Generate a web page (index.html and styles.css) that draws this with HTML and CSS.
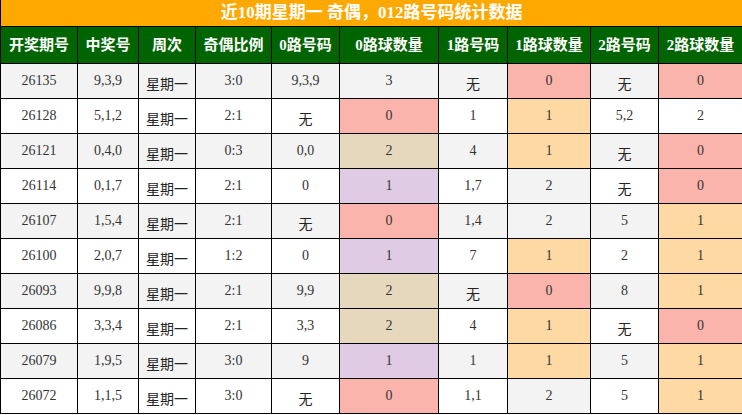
FILE: index.html
```html
<!DOCTYPE html>
<html lang="zh">
<head>
<meta charset="utf-8">
<link rel="stylesheet" href="styles.css">
</head>
<body>
<table class="stats">
  <colgroup>
    <col class="c1"><col class="c2"><col class="c3"><col class="c4"><col class="c5">
    <col class="c6"><col class="c7"><col class="c8"><col class="c9"><col class="c10">
  </colgroup>
  <thead>
    <tr class="title-row"><th colspan="10">近10期星期一 奇偶，012路号码统计数据</th></tr>
    <tr class="head-row">
      <th>开奖期号</th><th>中奖号</th><th>周次</th><th>奇偶比例</th><th>0路号码</th>
      <th>0路球数量</th><th>1路号码</th><th>1路球数量</th><th>2路号码</th><th>2路球数量</th>
    </tr>
  </thead>
  <tbody>
    <tr class="odd">
      <td>26135</td><td>9,3,9</td><td class="cn">星期一</td><td>3:0</td><td>9,3,9</td>
      <td>3</td><td class="cn">无</td><td class="pink">0</td><td class="cn">无</td><td class="pink">0</td>
    </tr>
    <tr>
      <td>26128</td><td>5,1,2</td><td class="cn">星期一</td><td>2:1</td><td class="cn">无</td>
      <td class="pink">0</td><td>1</td><td class="peach">1</td><td>5,2</td><td>2</td>
    </tr>
    <tr class="odd">
      <td>26121</td><td>0,4,0</td><td class="cn">星期一</td><td>0:3</td><td>0,0</td>
      <td class="tan">2</td><td>4</td><td class="peach">1</td><td class="cn">无</td><td class="pink">0</td>
    </tr>
    <tr>
      <td>26114</td><td>0,1,7</td><td class="cn">星期一</td><td>2:1</td><td>0</td>
      <td class="lav">1</td><td>1,7</td><td class="grey">2</td><td class="cn">无</td><td class="pink">0</td>
    </tr>
    <tr class="odd">
      <td>26107</td><td>1,5,4</td><td class="cn">星期一</td><td>2:1</td><td class="cn">无</td>
      <td class="pink">0</td><td>1,4</td><td class="grey">2</td><td>5</td><td class="peach">1</td>
    </tr>
    <tr>
      <td>26100</td><td>2,0,7</td><td class="cn">星期一</td><td>1:2</td><td>0</td>
      <td class="lav">1</td><td>7</td><td class="peach">1</td><td>2</td><td class="peach">1</td>
    </tr>
    <tr class="odd">
      <td>26093</td><td>9,9,8</td><td class="cn">星期一</td><td>2:1</td><td>9,9</td>
      <td class="tan">2</td><td class="cn">无</td><td class="pink">0</td><td>8</td><td class="peach">1</td>
    </tr>
    <tr>
      <td>26086</td><td>3,3,4</td><td class="cn">星期一</td><td>2:1</td><td>3,3</td>
      <td class="tan">2</td><td>4</td><td class="peach">1</td><td class="cn">无</td><td class="pink">0</td>
    </tr>
    <tr class="odd">
      <td>26079</td><td>1,9,5</td><td class="cn">星期一</td><td>3:0</td><td>9</td>
      <td class="lav">1</td><td>1</td><td class="peach">1</td><td>5</td><td class="peach">1</td>
    </tr>
    <tr>
      <td>26072</td><td>1,1,5</td><td class="cn">星期一</td><td>3:0</td><td class="cn">无</td>
      <td class="pink">0</td><td>1,1</td><td class="grey">2</td><td>5</td><td class="peach">1</td>
    </tr>
  </tbody>
</table>
</body>
</html>
```

FILE: styles.css
```css
html, body {
  margin: 0;
  padding: 0;
  background: #ffffff;
}

.stats {
  border-collapse: collapse;
  table-layout: fixed;
  width: 742px;
  font-family: "Liberation Serif", "Noto Sans CJK SC", serif;
}

.c1 { width: 77px; }
.c2 { width: 61px; }
.c3 { width: 57px; }
.c4 { width: 76px; }
.c5 { width: 68px; }
.c6 { width: 99px; }
.c7 { width: 69px; }
.c8 { width: 83px; }
.c9 { width: 68px; }
.c10 { width: 84px; }

.stats th,
.stats td {
  border: 1px solid #000;
  padding: 0;
  text-align: center;
  overflow: hidden;
  white-space: nowrap;
}

.title-row th {
  background: #ffa800;
  color: #fff;
  font-size: 17px;
  font-weight: bold;
  height: 26px;
  line-height: 24px;
  border-top: none;
}

.head-row th {
  background: #006400;
  color: #fff;
  font-size: 15px;
  font-weight: bold;
  height: 36px;
  line-height: 20px;
}

.stats td {
  height: 34px;
  line-height: 20px;
  font-size: 14px;
  color: #333;
  background: #fff;
}

.stats tr.odd td {
  background: #f3f3f3;
}

.stats td.cn {
  font-family: "Noto Sans CJK SC", sans-serif;
  color: #222;
  height: 31px;
  padding-top: 3px;
}

.stats tr td.pink { background: #fab4ac; }
.stats tr td.peach { background: #ffd9a4; }
.stats tr td.tan { background: #e6d8bc; }
.stats tr td.lav { background: #dfcce4; }
.stats tr td.grey { background: #f3f3f3; }
```
